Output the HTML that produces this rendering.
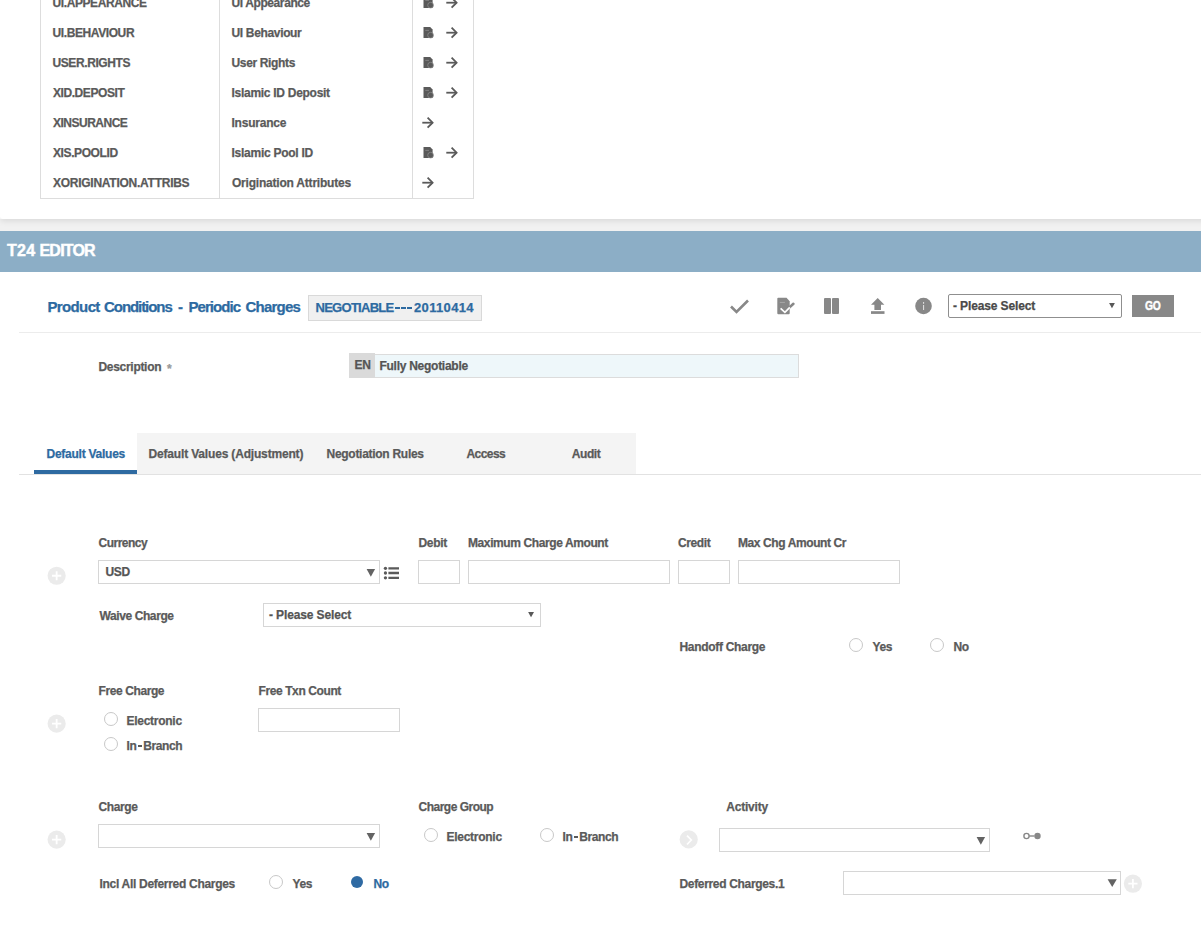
<!DOCTYPE html>
<html><head><meta charset="utf-8">
<style>
html,body{margin:0;padding:0;}
body{width:1201px;height:949px;position:relative;overflow:hidden;background:#fff;font-family:"Liberation Sans",sans-serif;font-weight:700;color:#5a5a5a;}
.a{position:absolute;}
.t{position:absolute;white-space:pre;line-height:12px;font-size:12px;letter-spacing:-0.35px;-webkit-text-stroke:0.25px currentColor;margin-left:0.5px;}
#toppanel{position:absolute;left:0;top:-10px;width:1241px;height:229px;background:#fff;box-shadow:0 2px 6px rgba(0,0,0,0.1);border-radius:0 0 3px 3px;z-index:2;}
#tp{position:absolute;left:0;top:10px;width:1201px;height:219px;}
#gap{position:absolute;left:0;top:219px;width:1201px;height:12px;background:#f1f1f1;}
#hdr{position:absolute;left:0;top:231px;width:1201px;height:41px;background:#8caec6;}
.vl{position:absolute;width:1px;background:#dddddd;}
.hl{position:absolute;height:1px;background:#dddddd;}
.box{position:absolute;box-sizing:border-box;border:1px solid #d6d6d6;background:#fff;}
.radio{position:absolute;box-sizing:border-box;width:14px;height:14px;border:1px solid #c8c8c8;border-radius:50%;background:#fff;}
.plus{position:absolute;width:18px;height:18px;border-radius:50%;background:#e9e9e9;}
.plus:before{content:"";position:absolute;left:4px;top:8px;width:10px;height:2px;background:#fff;}
.plus:after{content:"";position:absolute;left:8px;top:4px;width:2px;height:10px;background:#fff;}
.tri{position:absolute;width:0;height:0;border-left:4.5px solid transparent;border-right:4.5px solid transparent;border-top:8px solid #5a5a5a;}
</style></head>
<body>
<div id="toppanel"><div id="tp">
  <div class="vl" style="left:40px;top:0;height:199px"></div>
  <div class="vl" style="left:219px;top:0;height:199px"></div>
  <div class="vl" style="left:412px;top:0;height:199px"></div>
  <div class="vl" style="left:473px;top:0;height:199px"></div>
  <div class="hl" style="left:40px;top:198px;width:434px"></div>
  <div class="t" style="left:52px;top:-3px;letter-spacing:-0.400px">UI.APPEARANCE</div>
  <div class="t" style="left:231px;top:-3px;letter-spacing:-0.400px">UI Appearance</div>
  <div class="t" style="left:52px;top:27px;letter-spacing:-0.400px">UI.BEHAVIOUR</div>
  <div class="t" style="left:231px;top:27px;letter-spacing:-0.340px">UI Behaviour</div>
  <div class="t" style="left:52px;top:57px;letter-spacing:-0.400px">USER.RIGHTS</div>
  <div class="t" style="left:231px;top:57px;letter-spacing:-0.350px">User Rights</div>
  <div class="t" style="left:52.5px;top:87px;letter-spacing:-0.430px">XID.DEPOSIT</div>
  <div class="t" style="left:231px;top:87px;letter-spacing:-0.280px">Islamic ID Deposit</div>
  <div class="t" style="left:52.5px;top:117px;letter-spacing:-0.500px">XINSURANCE</div>
  <div class="t" style="left:231px;top:117px;letter-spacing:-0.220px">Insurance</div>
  <div class="t" style="left:52.5px;top:147px;letter-spacing:-0.400px">XIS.POOLID</div>
  <div class="t" style="left:231px;top:147px;letter-spacing:-0.260px">Islamic Pool ID</div>
  <div class="t" style="left:52.5px;top:177px;letter-spacing:-0.260px">XORIGINATION.ATTRIBS</div>
  <div class="t" style="left:231.5px;top:177px;letter-spacing:-0.210px">Origination Attributes</div>
  <svg class="a" style="left:0;top:0" width="480" height="219"><defs><g id="doc"><path d="M423.5 -10 H430.2 L432.6 -7.6 V1 H423.5 Z" fill="#5a5a5a"/><circle cx="430.6" cy="-1.8" r="2.9" fill="#5a5a5a" stroke="#9c9c9c" stroke-width="0.6"/><path d="M425.3 -6.6 H429" stroke="#8a8a8a" stroke-width="0.8"/></g><g id="arr" fill="none" stroke="#5a5a5a" stroke-width="1.8"><path d="M446.3 -4.3 H456.6"/><path d="M451.6 -9.3 L456.6 -4.3 L451.6 0.7"/></g></defs><use href="#doc" x="0" y="7"/><use href="#arr" x="0" y="7"/><use href="#doc" x="0" y="37"/><use href="#arr" x="0" y="37"/><use href="#doc" x="0" y="67"/><use href="#arr" x="0" y="67"/><use href="#doc" x="0" y="97"/><use href="#arr" x="0" y="97"/><use href="#arr" x="-24" y="127"/><use href="#doc" x="0" y="157"/><use href="#arr" x="0" y="157"/><use href="#arr" x="-24" y="187"/></svg>
</div></div>
<div id="gap"></div>
<div id="hdr"></div>
<div class="t" style="left:6.5px;top:243px;font-size:16px;line-height:16px;color:#fff;letter-spacing:0.3px;-webkit-text-stroke:0.45px #fff">T24</div><div class="t" style="left:39px;top:243px;font-size:16px;line-height:16px;color:#fff;letter-spacing:-0.8px;-webkit-text-stroke:0.45px #fff">EDITOR</div>
<div class="t" style="left:47px;top:299px;font-size:15px;line-height:15px;color:#2d6aa1;letter-spacing:-0.64px">Product</div><div class="t" style="left:103.5px;top:299px;font-size:15px;line-height:15px;color:#2d6aa1;letter-spacing:-1.06px">Conditions</div><div class="t" style="left:177.5px;top:299px;font-size:15px;line-height:15px;color:#2d6aa1;letter-spacing:0px">-</div><div class="t" style="left:188px;top:299px;font-size:15px;line-height:15px;color:#2d6aa1;letter-spacing:-0.94px">Periodic</div><div class="t" style="left:245px;top:299px;font-size:15px;line-height:15px;color:#2d6aa1;letter-spacing:-0.79px">Charges</div>
<div class="box" style="left:308px;top:295px;width:174px;height:26px;background:#f0f0f0;border-color:#d9d9d9"></div>
<div class="t" style="left:315px;top:301px;font-size:13px;line-height:13px;color:#2d6aa1;letter-spacing:-0.720px">NEGOTIABLE</div><div class="a" style="left:395.2px;top:307px;width:4.4px;height:2px;background:#2d6aa1"></div><div class="a" style="left:401.2px;top:307px;width:4.4px;height:2px;background:#2d6aa1"></div><div class="a" style="left:407.4px;top:307px;width:4.4px;height:2px;background:#2d6aa1"></div><div class="t" style="left:413.5px;top:301px;font-size:13px;line-height:13px;color:#2d6aa1;letter-spacing:0.350px">20110414</div>
<div class="a" style="left:19px;top:332px;width:1182px;height:1px;background:#ececec"></div>
<div class="box" style="left:948px;top:294px;width:174px;height:24px;border-color:#8f8f8f;border-radius:2px"></div>
<div class="t" style="left:952.5px;top:300px;color:#4a4a4a;letter-spacing:-0.130px">- Please Select</div>
<div class="a" style="left:1132px;top:295px;width:42px;height:22px;background:#888"></div>
<div class="t" style="left:1144px;top:300px;color:#fff;letter-spacing:-0.2px;-webkit-text-stroke:0.4px #fff;transform:scaleX(0.86);transform-origin:0 0">GO</div>
<div class="t" style="left:98px;top:361px;letter-spacing:-0.300px">Description</div>
<div class="t" style="left:166.5px;top:362.5px;color:#9a9a9a;font-weight:700;font-size:12px">*</div>
<div class="a" style="left:349px;top:353px;width:26px;height:25px;background:#dadada"></div>
<div class="t" style="left:354px;top:359px;color:#555;letter-spacing:-0.350px">EN</div>
<div class="box" style="left:375px;top:354px;width:424px;height:24px;background:#eef7fa;border-color:#dcdcdc;border-left:0"></div>
<div class="t" style="left:379px;top:360px;color:#555;letter-spacing:-0.270px">Fully Negotiable</div>
<div class="a" style="left:137px;top:433px;width:499px;height:41px;background:#f4f4f4"></div>
<div class="a" style="left:19px;top:474px;width:1182px;height:1px;background:#e2e2e2"></div>
<div class="a" style="left:34px;top:470px;width:103px;height:4px;background:#2e6aa1"></div>
<div class="t" style="left:46px;top:448px;color:#2d6aa1;letter-spacing:-0.250px">Default Values</div>
<div class="t" style="left:148px;top:448px;letter-spacing:-0.170px">Default Values (Adjustment)</div>
<div class="t" style="left:326px;top:448px;letter-spacing:-0.280px">Negotiation Rules</div>
<div class="t" style="left:466px;top:448px;letter-spacing:-0.550px">Access</div>
<div class="t" style="left:571.2px;top:448px;letter-spacing:-0.400px">Audit</div>
<div class="t" style="left:98px;top:537px;letter-spacing:-0.500px">Currency</div>
<div class="t" style="left:418px;top:537px;letter-spacing:-0.300px">Debit</div>
<div class="t" style="left:467.5px;top:537px;letter-spacing:-0.400px">Maximum Charge Amount</div>
<div class="t" style="left:677.5px;top:537px;letter-spacing:-0.400px">Credit</div>
<div class="t" style="left:737.5px;top:537px;letter-spacing:-0.400px">Max Chg Amount Cr</div>
<div class="box" style="left:98px;top:560px;width:282px;height:24px"></div>
<div class="t" style="left:105px;top:566px;color:#555">USD</div>
<div class="box" style="left:418px;top:560px;width:42px;height:24px"></div>
<div class="box" style="left:468px;top:560px;width:202px;height:24px"></div>
<div class="box" style="left:678px;top:560px;width:52px;height:24px"></div>
<div class="box" style="left:738px;top:560px;width:162px;height:24px"></div>
<div class="t" style="left:99px;top:610px;letter-spacing:-0.400px">Waive Charge</div>
<div class="box" style="left:263px;top:603px;width:278px;height:24px"></div>
<div class="t" style="left:268.5px;top:609px;color:#555;letter-spacing:-0.130px">- Please Select</div>
<div class="t" style="left:679px;top:641px;letter-spacing:-0.310px">Handoff Charge</div>
<div class="radio" style="left:849px;top:638px"></div>
<div class="t" style="left:872px;top:641px;">Yes</div>
<div class="radio" style="left:930px;top:638px"></div>
<div class="t" style="left:953px;top:641px;">No</div>
<div class="t" style="left:98px;top:685px;letter-spacing:-0.400px">Free Charge</div>
<div class="t" style="left:258px;top:685px;letter-spacing:-0.400px">Free Txn Count</div>
<div class="radio" style="left:104px;top:712px"></div>
<div class="t" style="left:126px;top:715px;letter-spacing:-0.270px">Electronic</div>
<div class="radio" style="left:104px;top:737px"></div>
<div class="t" style="left:126px;top:740px;letter-spacing:-0.3px">In</div><div class="a" style="left:138.3px;top:745.2px;width:3.7px;height:1.9px;background:#5a5a5a"></div><div class="t" style="left:142.8px;top:740px;letter-spacing:-0.4px">Branch</div>
<div class="box" style="left:258px;top:708px;width:142px;height:24px"></div>
<div class="t" style="left:98px;top:801px;letter-spacing:-0.400px">Charge</div>
<div class="t" style="left:418px;top:801px;letter-spacing:-0.500px">Charge Group</div>
<div class="t" style="left:725.7px;top:801px;letter-spacing:-0.200px">Activity</div>
<div class="box" style="left:98px;top:824px;width:282px;height:24px"></div>
<div class="radio" style="left:424px;top:828px"></div>
<div class="t" style="left:446px;top:831px;letter-spacing:-0.270px">Electronic</div>
<div class="radio" style="left:540px;top:828px"></div>
<div class="t" style="left:562px;top:831px;letter-spacing:-0.3px">In</div><div class="a" style="left:574.3px;top:836.2px;width:3.7px;height:1.9px;background:#5a5a5a"></div><div class="t" style="left:578.8px;top:831px;letter-spacing:-0.4px">Branch</div>
<div class="box" style="left:719px;top:828px;width:271px;height:24px"></div>
<div class="t" style="left:99px;top:878px;letter-spacing:-0.300px">Incl All Deferred Charges</div>
<div class="radio" style="left:269px;top:875px"></div>
<div class="t" style="left:292px;top:878px;">Yes</div>
<div class="a" style="left:350.6px;top:875.6px;width:12.6px;height:12.6px;border-radius:50%;background:#2f6aa3"></div>
<div class="t" style="left:373px;top:878px;color:#2d6aa1">No</div>
<div class="t" style="left:679px;top:878px;letter-spacing:-0.330px">Deferred Charges.1</div>
<div class="box" style="left:843px;top:871px;width:278px;height:24px"></div>
<svg class="a" style="left:0;top:0" width="1201" height="949">
<g fill="none" stroke="#888" stroke-width="2.6"><path d="M731 306.5 L736.5 312 L748 300.5"/></g>
<path d="M778.3 297.8 H786.5 L789.7 301.2 V313.2 Q789.7 314.2 788.7 314.2 H778.3 Q777.3 314.2 777.3 313.2 V298.8 Q777.3 297.8 778.3 297.8 Z" fill="#888"/>
<path d="M779.8 302.4 H784.9" stroke="#ababab" stroke-width="0.9"/>
<path d="M789 307.9 L793.4 303.8" stroke="#888" stroke-width="2.6" stroke-linecap="round"/>
<path d="M780.6 308.4 L784.9 312.4 L789.8 307.4" fill="none" stroke="#fff" stroke-width="1.7"/>
<rect x="824" y="298" width="7" height="16" rx="1" fill="#888"/>
<rect x="832" y="298" width="7" height="16" rx="1" fill="#888"/>
<path d="M871 304.7 L877.7 298 L884.4 304.7 H881 V310 H874.4 V304.7 Z" fill="#888"/>
<rect x="871" y="311.2" width="13.5" height="2.7" fill="#888"/>
<circle cx="923.5" cy="306" r="8.3" fill="#888"/>
<rect x="923" y="302" width="1.1" height="1.8" fill="#dcdcdc"/>
<rect x="923" y="305" width="1.1" height="5" fill="#dcdcdc"/>
<path d="M366.6 569.1 H375.1 L370.85 576.85 Z" fill="#636363"/>
<path d="M366.6 833.1 H375.1 L370.85 840.85 Z" fill="#636363"/>
<path d="M976.6 837.1 H985.1 L980.85 844.85 Z" fill="#636363"/>
<path d="M1107.6 879.15 H1116.8 L1112.20 886.9 Z" fill="#636363"/>
<path d="M528.1 612.05 H534 L531.05 617.3 Z" fill="#585858"/>
<path d="M1109.06 303.05 H1114.9 L1111.98 308.3 Z" fill="#585858"/>
<g fill="#5a5a5a"><circle cx="385.45" cy="568.3" r="1.65"/><circle cx="385.45" cy="573" r="1.65"/><circle cx="385.45" cy="577.8" r="1.65"/></g>
<g stroke="#5a5a5a" stroke-width="2.3"><path d="M388.4 568.3 H399 M388.4 573 H399 M388.4 577.8 H399"/></g>
<circle cx="56.65" cy="575.75" r="9.1" fill="#ebebeb"/><path d="M52.05 575.75 H61.25 M56.65 571.15 V580.35" stroke="#fff" stroke-width="1.8"/>
<circle cx="56.65" cy="723.65" r="9.1" fill="#ebebeb"/><path d="M52.05 723.65 H61.25 M56.65 719.05 V728.25" stroke="#fff" stroke-width="1.8"/>
<circle cx="56.65" cy="839.6" r="9.1" fill="#ebebeb"/><path d="M52.05 839.60 H61.25 M56.65 835.00 V844.20" stroke="#fff" stroke-width="1.8"/>
<circle cx="1132.9" cy="883.7" r="9.1" fill="#ebebeb"/><path d="M1128.30 883.70 H1137.50 M1132.90 879.10 V888.30" stroke="#fff" stroke-width="1.8"/>
<circle cx="688.7" cy="839.4" r="9.1" fill="#ebebeb"/><path d="M687 835.6 L691.3 840 L687 844.5" fill="none" stroke="#fff" stroke-width="1.7"/>
<circle cx="1026.5" cy="836" r="2.6" fill="none" stroke="#888" stroke-width="1.4"/>
<path d="M1029.2 836 H1034.5" stroke="#888" stroke-width="1.4"/>
<circle cx="1037.5" cy="836" r="3.2" fill="#888"/>
</svg>
</body></html>
